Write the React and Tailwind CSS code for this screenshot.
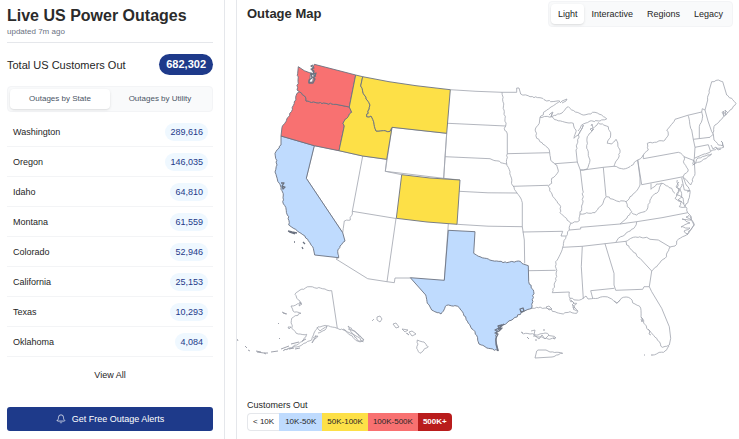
import React from "react";
import { Bell } from "lucide-react";

const outages = [
  ["Washington", "289,616"],
  ["Oregon", "146,035"],
  ["Idaho", "64,810"],
  ["Montana", "61,559"],
  ["Colorado", "52,946"],
  ["California", "25,153"],
  ["Texas", "10,293"],
  ["Oklahoma", "4,084"],
];

// Borders are lists of points; a point marked "~" is reached by an uneven
// line (coast or river), any other point by a straight one.
function border(points) {
  let last = null;
  let d = "";
  for (const token of points.trim().split(/\s+/)) {
    const rough = token[0] === "~";
    const [x, y] = token.replace("~", "").split(",").map(Number);
    if (!last) d += `M${x} ${y}`;
    else {
      if (rough) {
        const length = Math.hypot(x - last[0], y - last[1]);
        const steps = Math.max(1, Math.round(length / 2.2));
        for (let i = 1; i < steps; i++) {
          const px = last[0] + ((x - last[0]) * i) / steps;
          const py = last[1] + ((y - last[1]) * i) / steps;
          const key = Math.round(px * 10) * 13 + Math.round(py * 10) * 37;
          d += `L${(px + Math.sin(key) * 0.6).toFixed(1)} ${(py + Math.cos(key * 1.7) * 0.6).toFixed(1)}`;
        }
      }
      d += `L${x} ${y}`;
    }
    last = [x, y];
  }
  return d;
}

const plainBorders = [
  // Nevada, Utah, Arizona, New Mexico
  "314.3,145.7 306.3,178.3 342.7,232.7",
  "314.3,145.7 339,150.7 362.7,156 352.3,211.3 ~350.3,220 ~344.3,221 343.3,228.3 342.7,232.7",
  "362.7,156 386.7,159.3 385.3,171.3 401.7,174.7",
  "352.3,211.3 396,218.5 387,281.7",
  "338.7,257.7 336,259 367.7,278.7 387,281.7 394.3,282.7 395,278 410.3,278",
  "444.3,280.3 448.3,224",
  // Wyoming
  "392,127.3 446.7,133.3 443.7,178.3 385.3,171.3 392,127.3",
  // Dakotas, Nebraska, Kansas, Oklahoma
  "450.3,89.7 476,91.3 502,92.3 516.7,92.3 516.7,88 519,88 520.7,94 ~530,96.7 ~540,97.7 ~546.7,101 ~560,101.3 ~546.7,110 ~540,117.3",
  "502,92.3 ~504,110 ~505.7,126 ~504.3,128.3 ~507.3,134 507.3,153.7 ~506.7,164",
  "447.7,123.3 505.7,126",
  "446.7,133.3 445,156.7 490,158.7 ~495,160.7 ~506.7,164 ~510,171.7 ~512.3,185 ~517,193 ~520,197 ~522.3,202.7 522.3,226.7 524.3,240 524.7,263.3",
  "445,156.7 443.7,178.3 460,180",
  "459.3,191.3 488,192.8 517,193",
  "457,224.3 488,226.2 522.3,226.7",
  // Minnesota, Iowa, Wisconsin
  "540,117.3 539.3,123.3 ~535.3,129 ~536.7,138.3 ~548.3,148.3 ~549.7,152.7 ~550.7,160 ~556.7,165 ~558.3,171.7 ~551.7,178.3 ~551.7,183.3 ~548.3,186.7",
  "507.3,153.7 549.7,152.7",
  "513,186.3 548.3,185.3",
  "555,163.7 577.3,162",
  "540,117.3 ~551.7,116.7 ~556.7,120 ~573.3,123.3 ~576,130 ~574,138.3 ~579.3,133.3 ~583.3,125 ~579.3,133.3 ~576,150 577.3,162 580.3,170 583.3,170",
  "551.7,116.7 ~562,113 ~568.3,106.7 ~571.7,110 ~583.3,115 ~595,112.3 ~601.7,115 ~606.7,119 ~600,121 ~590,121 ~583.3,124 ~578,131",
  "560,103 562,101 567,99 566,101 562,103",
  // Michigan
  "580.3,170 583.3,170 587,169 ~590,160 ~586.7,148.3 ~587.3,136.7 ~593.3,128.3 ~598.3,122.7 ~608.3,126.7 ~610.7,135 ~607.3,143.3 ~611.7,144 ~616,139.3 ~620,150 ~618.3,158.3 ~614,166.3",
  "583.3,170 603.3,167.3 614,166.3 ~623.3,169 ~630,166.7 ~637.7,160 ~643.3,155",
  "549,115 551,113 553,112 551,117 552,113",
  "591,126 592,124 593,128 590,129 592,131 594,129",
  // Mississippi valley
  "548.3,186.7 ~552,194 ~555.7,200 ~560.7,206.7 ~560,212.7 ~570.7,223.3 ~569.3,230 ~566,236.7 ~562.7,247.3 ~555.7,261.7 ~556.7,276.7 ~552.3,292.7 569.3,292 ~570,298.3",
  "522.7,232 562.7,231.3 561,236 566,236",
  "528.7,270.7 555.7,270.3",
  "531.7,308.3 ~536.7,307.3 ~546.7,308.3 ~555,311.7 ~563.3,314 ~570,311.7 ~576.7,313.3 ~578,311 ~572.7,307.3 ~576.7,303.3 ~570.7,301.7 ~570,298.3 ~576,300 ~581.7,299.3",
  "546,307 549,306 552,309 549,310 546,307",
  "571,300 574,303 572,305 575,307 573,309 577,311",
  // Ohio valley
  "580.3,170 582.7,190 ~582.7,203.3 ~581.7,208.3 ~580,214",
  "603.3,167.3 606,196.7",
  "570.7,223.3 ~579.3,220.7 ~580,214 ~586.7,212.7 ~595,212.7 ~600,206.7 ~606.7,196.7 ~616.7,201 ~626,201.7 ~630,196.7 ~637.3,190 ~640,185 640,178 637.7,160",
  "626,201.7 ~627.3,206.7 ~631.7,211.7 ~627,218 620,224",
  "631.7,212.7 ~636.7,215 ~646.7,210 ~650,200 ~651.7,196.7 ~658.3,191.7 ~661.7,183.3 ~671.7,188.3 ~675,193.3",
  "651,183.5 651,189.3 ~656.7,184 ~661.7,183.3",
  // Tennessee, Alabama, Georgia
  "569.3,230 580.7,229 580.7,227.3 620,224 636.7,221.7 662,217.7 687.7,212.7",
  "636.7,221.7 ~635,226.7 ~628.3,231.7 ~618.3,238.3 616,242",
  "562.7,247.3 582.3,246.3 605,243.7 626,241.3",
  "582.3,246.3 581.3,266.7 583.3,298.7",
  "605,243.7 614,273.3 614,285 615.7,290.3 642.7,289.3 644,286.7 649.3,286.7",
  "592.7,298.3 590.7,290.7 614.3,288.3",
  "581.7,299.3 586,296 588,299 591.7,298.7 ~605,296.7 ~611.7,299 ~616.7,303.3 ~623.3,297.3 ~628.3,297.3 ~635,304 ~640,306.7 ~641,316.7 ~648.3,330 ~656.7,338.3 ~662.3,347.3 ~669.3,345 670.7,338.3 669.3,326.7 661.7,308.3 651.7,291.7 649.3,286.7 651.7,271",
  "669,346 ~665,351 ~653,355",
  "641,317 643,319 642,322 641,319",
  "648,329 650,331 649,334 651,335",
  "614,301 617,303 620,300",
  // Carolinas
  "626,241.3 626.7,245 ~640,258.3 651.7,271 ~665,258.3 ~670,247 ~675,246 ~678.3,239.3 ~686.7,235 ~694.3,225 ~690,215 687.7,212.7",
  "626,241.3 ~633.3,237.3 ~646.7,237.3 650,239.3 658.3,240 670,247",
  "689,215 ~686,217 ~691,220 ~682,219 ~690,223 ~681,227 ~690,228 ~684,231 ~688,234",
  "690,216 692,221 694,225 690,231 687,235",
  // Chesapeake and Delaware
  "677.3,180 ~678.3,191.7 ~675,198.3 ~681.7,201.7 ~679.3,206.7 ~686,207 ~687.7,212.7",
  "679,182 ~676,187 ~680,189 ~677,195 ~682,197 ~678,200 ~684,204",
  "681.7,177.7 684.3,190 690,190.7 ~688.3,200 ~685,206.7 ~683,198 ~680,190 ~682,184",
  "683,177.3 ~687,186 ~690,190.7 687,192",
  // Pennsylvania and New Jersey
  "643.3,155 643.3,158.7 678.3,152.3 ~684,156.7 ~684,163.3 ~688.3,170 ~683.3,176.7 641.7,184.7 637.7,160",
  "684,156.7 694.3,160.7 695,173.3 ~690.7,185 ~688,182 ~683.3,177.3",
  // New York and New England
  "643.3,155 ~648.3,150 ~647.3,143.3 ~665,140 ~668.3,135 ~666.7,130 ~675,119.3 687.7,115.3 701.7,112",
  "687.7,115.3 ~691.7,130 693.3,139.3 695,147.3 694.3,158.3 692.7,164",
  "692.7,165 ~700,162 ~711.7,154 ~705,156 ~698,158 ~692.7,165",
  "701.7,112 ~702.3,118.3 ~699.3,126.7 699.3,138.3",
  "693.3,139.3 710,137.3 ~713.3,134 714,140 ~718.3,145 ~723.3,146 ~721,141 ~724,147 ~716.7,148.3 ~711,151",
  "695,147.3 708.3,144.7 710.7,151.7 ~701.7,155 694.3,158.3",
  "711,145 713,149 716,147 718,150 721,149",
  "701.7,112 702.3,108.7 705,110 708,121 711.7,131.7 713.3,134",
  "705,110 707.7,100 ~709,91 711.7,81.7 ~718.3,80 ~722.7,81.7 726.7,95 ~731.7,98.3 ~736,103.3 ~730,110 ~723.3,116.7 ~715,125 ~712.7,133.3",
  "722,112 724,116 723,111 726,115 725,110 728,113",
  // Alaska
  "337.3,328.3 331.7,290.7 ~325,289 ~310,286.7 ~300,290 ~295,294.3 ~301,303.3 ~291,306 ~293,311 ~301,313.3 ~291.7,318.3 ~291.7,328.3 ~298.3,334 ~306.7,334.3 ~303,341 ~296.7,345 ~283.3,350.7 ~289,348 ~300,346 ~311.7,340 ~314,333 ~318.3,326.7 ~326.7,325.7 ~337.3,328.3 ~346,331 ~356,336 ~363.3,341.7 ~357,341 ~350,335 ~343,329",
  "348,329 ~354,331 ~361,337 ~364,340 ~360,342 ~352,333 ~348,326 ~356,332 ~364,340",
  "317,327 ~320,331 ~327,326 ~325,330 ~318,333",
  "313,338 ~318,336 ~312,343 ~316,335",
  "288,327 291,327 289,329 288,327",
  "299,302 302,304 299,306 301,302",
  // Hawaii and Puerto Rico
  "377,317 380,316 382,319 380,322 377,320 377,317",
  "372,321 374,319",
  "393,324 396,323 399,327 396,328 393,324",
  "402,329 408,330 405,332 402,329",
  "406,333 409,335 407,333",
  "409,332 412,331 416,334 412,336 409,332",
  "417.3,340 ~424,342 ~428.3,346.7 ~420,353.3 ~416.7,348.3 ~418,344 ~417.3,340",
  "536.7,351 538,350 546,350 550,352 ~562.7,353.3 ~552,357 535,358 536.7,351",
  "522,333 ~530,334 ~538,335 ~545,333 ~552,336 ~556,338 ~548,339 ~540,337 ~533,336",
  "531,331 535,330 534,335 539,339 542,335 545,339 549,335",
];

const islands = "M237 339l1 2m7 5l2 2m1 2l2 1m6 0l5 1m3 1l4 0m3-1l7-1m3-2l8-3m2-2l8-2m3-1l4-2M257 352l7 1 2 1M278 323l1 1m0 14l1 1M282 312l4 2m-3-1l4 1M295 349l5-1m-11 1l5-1M644 355h1m6 0h2M521 332l2 1m4 4l2 2m14-9l2 0m8 8l2 1m-20 1l2 0";

const shadedStates = [
  {
    name: "California",
    fill: "#bfdbfe",
    points: "281,136 281,145 ~275,153.3 ~277,165 ~275,172 ~279.3,183.3 ~283.3,195 ~282.7,201.7 ~288.7,216.7 ~288.7,225 ~301,233.3 ~307.7,239.3 ~313.3,248.3 314.7,255 338.7,257.7 ~337.7,251.7 ~340,246 ~345,241 342.7,232.7 306.3,178.3 314.3,145.7 281,136",
  },
  {
    name: "Oregon",
    fill: "#f87171",
    points: "299.3,91.7 297,93.3 ~294.3,103.3 ~288.7,116.7 ~282,127.3 281,136 314.3,145.7 339,150.7 344.3,126 ~343,123.3 ~351.7,112.3 349.3,107 336,104.3 ~326,103.3 ~316,102.7 ~306,101 ~304.7,96 ~299.3,91.7",
  },
  {
    name: "Washington",
    fill: "#f87171",
    points: "298.3,66.7 304.3,70.7 311,73.3 ~310,78.3 ~308.7,82.3 ~312.7,81.7 ~315,75 ~312,70.7 314.3,64.3 355.7,75 349.3,107 336,104.3 ~326,103.3 ~316,102.7 ~306,101 ~304.7,96 ~299.3,91.7 297,90 ~298,81.7 ~297.7,73.3 298.3,66.7",
  },
  {
    name: "Idaho",
    fill: "#fde047",
    points: "355.7,75 362.7,76.7 360.7,86 ~364.3,95 ~370,105 ~366.7,116.7 ~371,116 ~376,131 ~390,131.3 392,127.3 386.7,159.3 362.7,156 339,150.7 344.3,126 ~343,123.3 ~351.7,112.3 349.3,107 355.7,75",
  },
  {
    name: "Montana",
    fill: "#fde047",
    points: "362.7,76.7 389,81.7 416,85.7 450.3,89.7 446.7,133.3 392,127.3 ~390,131.3 ~376,131 ~371,116 ~366.7,116.7 ~370,105 ~364.3,95 ~360.7,86 362.7,76.7",
  },
  {
    name: "Colorado",
    fill: "#fde047",
    points: "401.7,174.7 430,178 460,180 457,224.3 427,222 396.3,218.3 401.7,174.7",
  },
  {
    name: "Texas",
    fill: "#bfdbfe",
    points: "448.3,230.3 475,231.7 473.7,253.3 ~480,256.7 ~488.3,259 ~496.7,261 ~506.7,262.7 ~518.3,261 ~523.3,264 528.3,265.7 528.7,281.7 ~533.7,291.7 ~531.7,308.3 ~523.3,311.7 ~513.3,319 ~503.3,325 ~496.7,331.7 ~495.7,340 498.3,350.7 ~488.3,348.3 ~479,344 ~475,331.7 ~468.3,323.3 ~463.3,313.3 ~457.7,306.3 ~446.7,305.3 ~441,314 ~431.7,310 ~427.3,303.3 ~425.7,295 410.3,277.7 444.3,280.3 448.3,230.3",
  },
];

const inlets =
  "M313 65l-2 1 3 2-3 1 3 2-1 3 3-1-1 3-4-3 1 5-3 2 0 3 4 0 2-4-2-2 3-1M281 183l3 0-2 3 3 1-2 2-1-3M288 231l4 1 5 1m-8-1l6 2M294 242l1 0M303 242l2 2M302 247l1 2M520 309l3-1 1 3-3 1zM504 324l-3 2-2 3 3-1-3 3-4 2 3 1-2 4 0 6 1 4 1 3M497 331l-2-1 4-2-1-2 4-1";

function OutageMap() {
  return (
    <svg viewBox="237 27 502 366" className="block w-full" role="img" aria-label="Outage map of the United States" fill="none" strokeLinejoin="round">
      <g stroke="#a0a3ad" strokeWidth="0.8">
        {plainBorders.map((points, i) => (
          <path key={i} d={border(points)} />
        ))}
        <path d={islands} strokeWidth="1" />
      </g>
      <g stroke="#6b7280" strokeWidth="0.9">
        {shadedStates.map((s) => (
          <path key={s.name} d={border(s.points) + "Z"} fill={s.fill} />
        ))}
        <path d={inlets} strokeWidth="1.3" />
      </g>
    </svg>
  );
}

export default function App() {
  return (
    <div className="flex min-h-screen gap-[11px] bg-white font-['Liberation_Sans',Arial,sans-serif] text-[9px] leading-3 text-[#262626]">
      <aside className="w-[225px] shrink-0 border-r border-gray-200 pr-[11px] pl-[7px]">
        <header className="border-b border-gray-200 pt-[5px] pb-[5px]">
          <h1 className="text-base leading-[22px] font-bold text-[#2b2b2b]">Live US Power Outages</h1>
          <p className="text-[8px] leading-[10px] text-gray-500">updated 7m ago</p>
        </header>
        <div className="mt-[11px] flex items-center justify-between">
          <h2 className="text-[11px] leading-4">Total US Customers Out</h2>
          <span className="rounded-full bg-[#1e3a8a] px-[7px] text-[11px] leading-[21px] font-bold text-white">682,302</span>
        </div>
        <div className="mt-[11px] grid grid-cols-2 rounded-sm border border-gray-100 bg-gray-50 p-[2px] text-[8px] text-gray-600">
          <button className="h-5 rounded-sm bg-white shadow-sm">Outages by State</button>
          <button className="h-5 rounded-sm">Outages by Utility</button>
        </div>
        <ul className="mt-[5px]">
          {outages.map(([state, count]) => (
            <li key={state} className="flex h-[30px] items-center justify-between border-b border-gray-100 px-[5px]">
              <span className="pl-px">{state}</span>
              <span className="rounded-full bg-[#eff8ff] px-[5px] leading-[18px] text-[#1e3a8a]">{count}</span>
            </li>
          ))}
        </ul>
        <button className="mt-3 block h-3 w-full">View All</button>
        <button className="mt-[26px] flex h-6 w-full items-center justify-center gap-[6px] rounded-[3px] bg-[#1e3a8a] text-white">
          <Bell size={10} strokeWidth={1.7} />
          Get Free Outage Alerts
        </button>
      </aside>
      <main className="flex min-w-0 flex-1 flex-col border-l border-gray-200">
        <div className="flex items-start justify-between pt-px pr-[6px] pl-[10px]">
          <h2 className="pt-[5px] text-[13px] leading-4 font-bold text-[#2b2b2b]">Outage Map</h2>
          <div className="flex rounded-sm border border-gray-100 bg-gray-50 p-[2px]">
            <button className="h-5 rounded-sm bg-white px-[7px] shadow-sm">Light</button>
            <button className="h-5 px-[7px]">Interactive</button>
            <button className="h-5 px-[7px]">Regions</button>
            <button className="h-5 px-[7px]">Legacy</button>
          </div>
        </div>
        <OutageMap />
        <section className="mt-[6px] pl-[10px]">
          <h3>Customers Out</h3>
          <div className="mt-[2px] flex text-[8px] leading-[18px]">
            <span className="h-[18px] rounded-l-sm border border-r-0 border-gray-200 px-[5px] leading-4">&lt; 10K</span>
            <span className="bg-[#bfdbfe] px-[6px]">10K-50K</span>
            <span className="bg-[#fde047] px-[5px]">50K-100K</span>
            <span className="bg-[#f87171] px-[5px]">100K-500K</span>
            <span className="rounded-r-sm bg-[#b91c1c] px-[5px] font-bold text-white">500K+</span>
          </div>
        </section>
      </main>
    </div>
  );
}
